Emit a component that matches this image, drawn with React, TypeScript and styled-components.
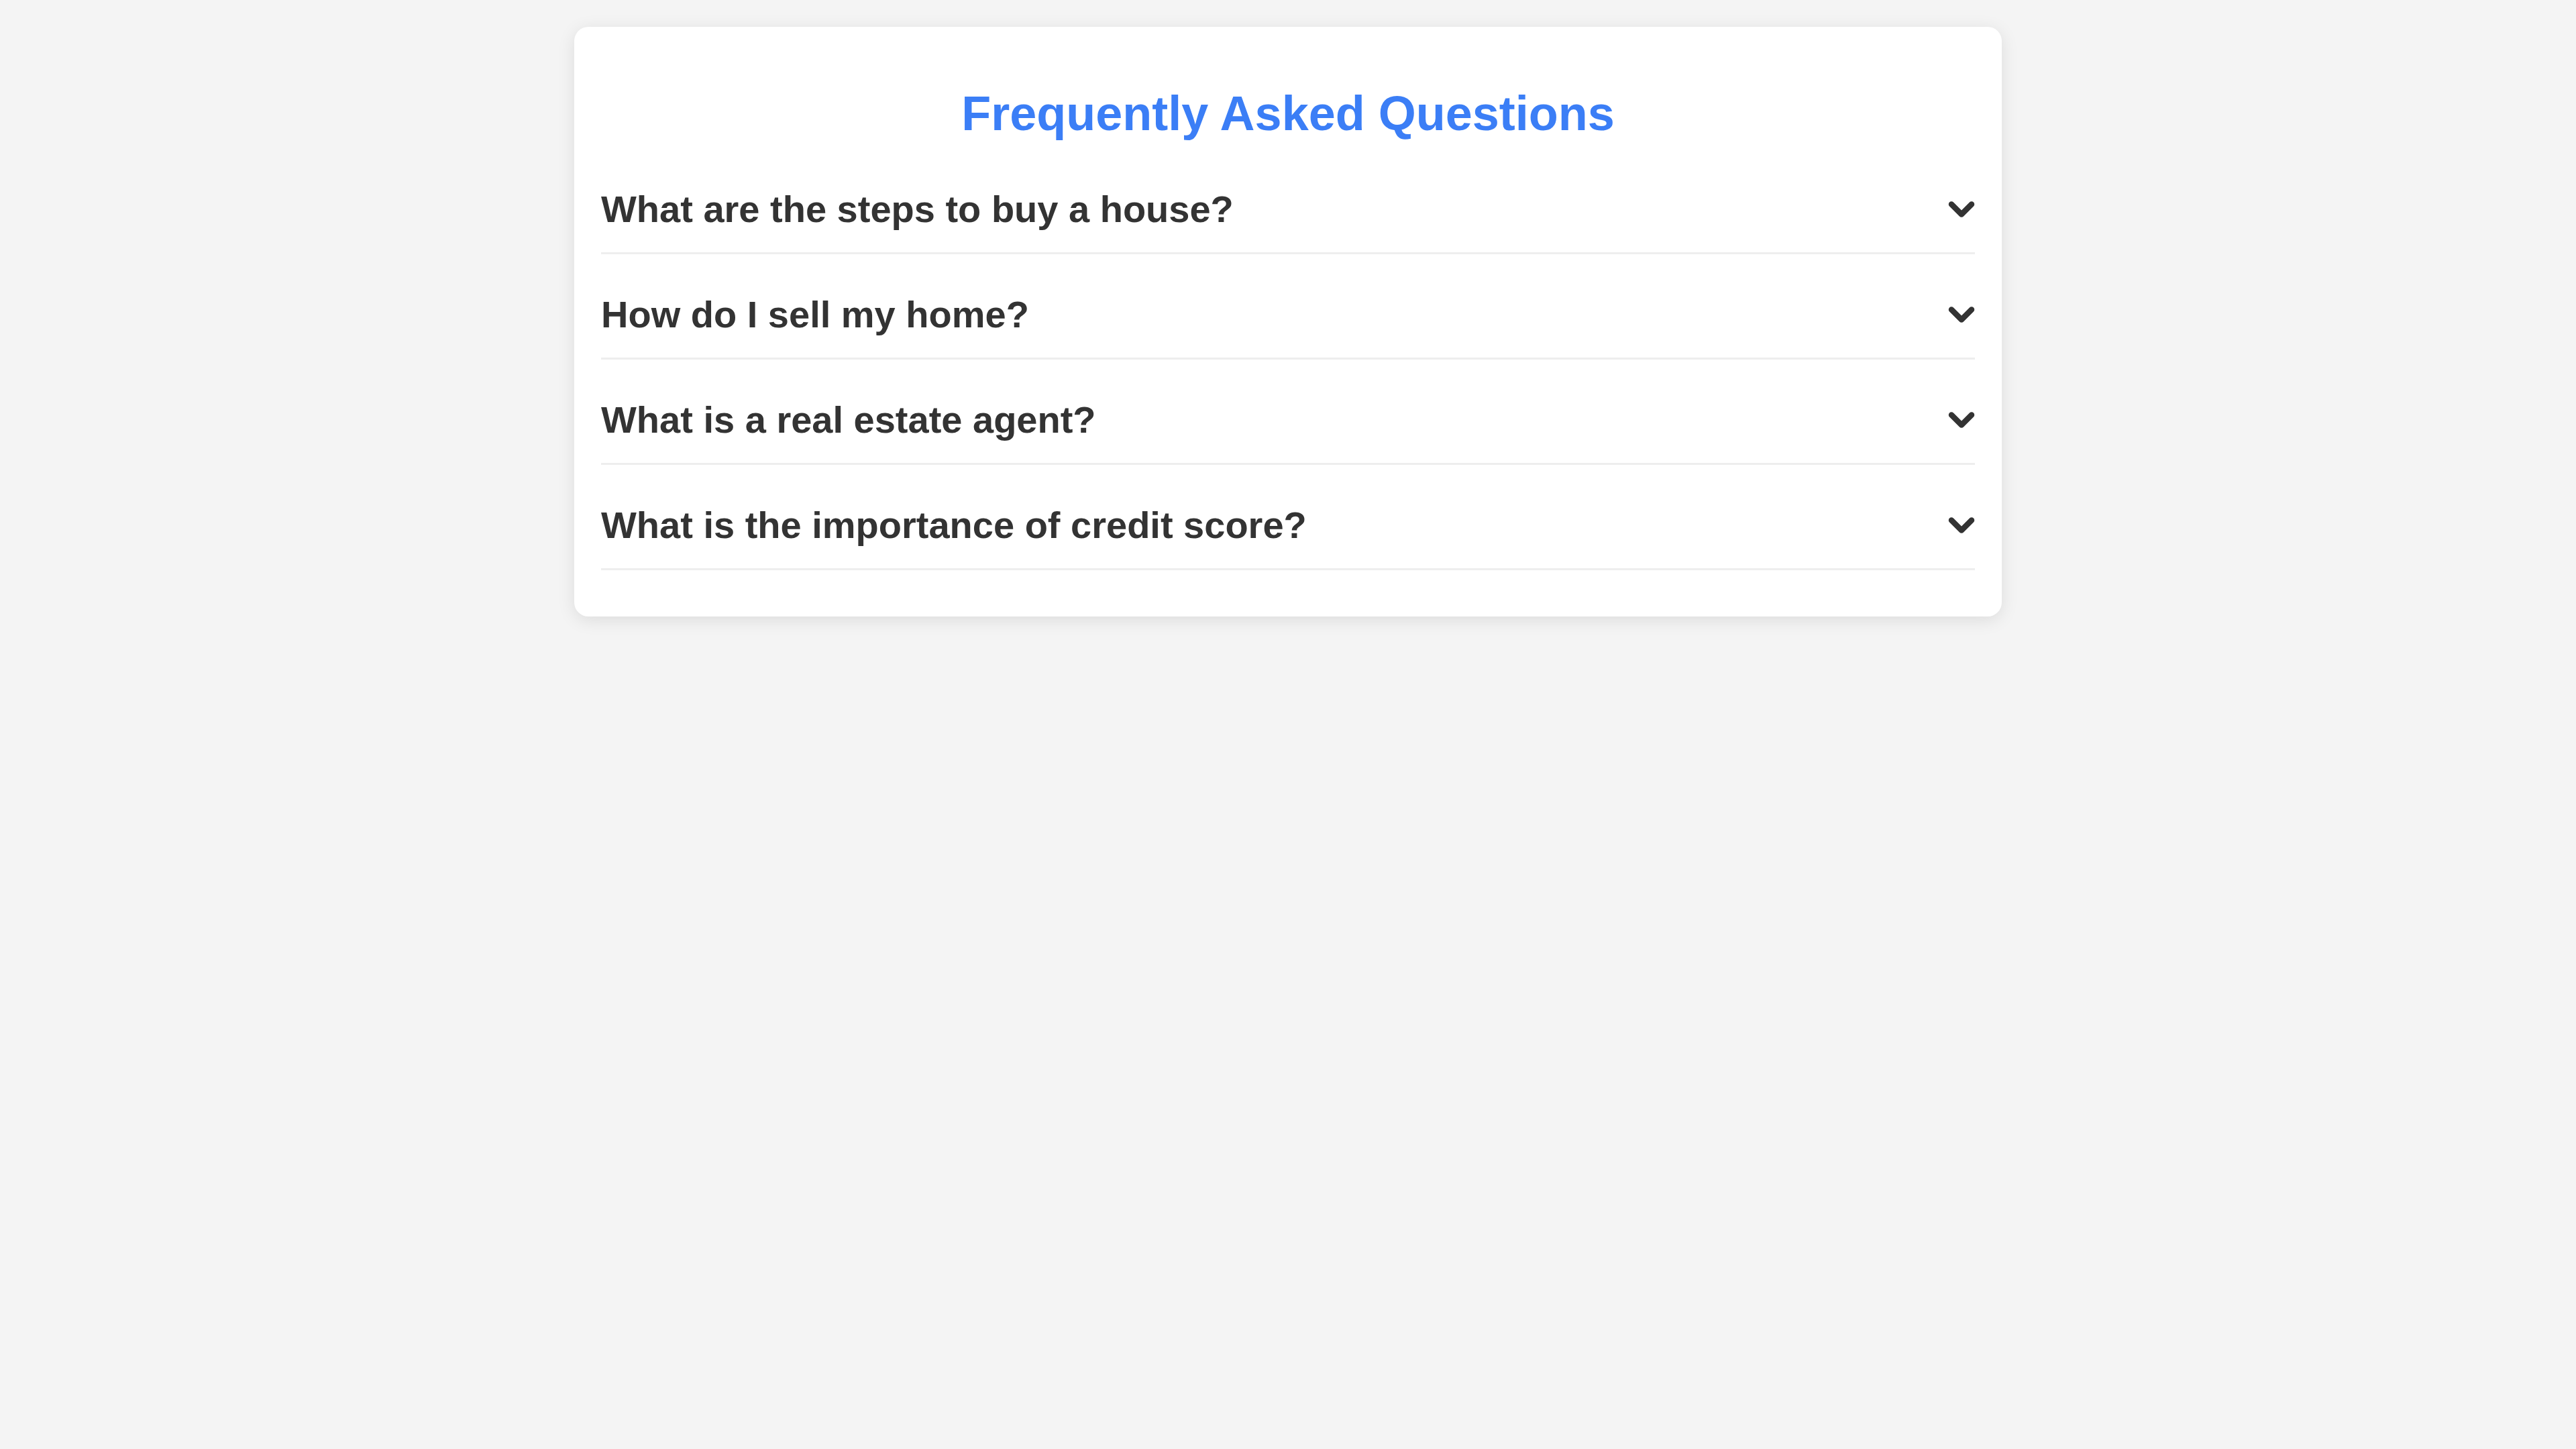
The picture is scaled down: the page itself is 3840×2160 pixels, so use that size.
import React from 'react';
import styled, { createGlobalStyle } from 'styled-components';

const GlobalStyle = createGlobalStyle`
  html, body {
    margin: 0;
    padding: 0;
    background: #f4f4f4;
    font-family: "Liberation Sans", Arial, sans-serif;
  }
`;

const Page = styled.div`
  min-height: 2160px;
  padding-top: 40px;
  box-sizing: border-box;
  display: flex;
  justify-content: center;
  align-items: flex-start;
`;

const Card = styled.div`
  width: 2128px;
  box-sizing: border-box;
  padding: 40px 40px 43px;
  background: #ffffff;
  border-radius: 21px;
  box-shadow: 0 5px 26px rgba(0, 0, 0, 0.1);
`;

const Title = styled.h2`
  margin: 48px 0 37px;
  text-align: center;
  font-size: 72px;
  font-weight: 700;
  line-height: 1.15;
  color: #3b7ef6;
`;

const Item = styled.div`
  display: flex;
  justify-content: space-between;
  align-items: center;
  padding: 32px 0;
  margin-bottom: 25.6px;
  border-bottom: 3px solid #eeeeee;
  cursor: pointer;
`;

const Question = styled.h3`
  margin: 0;
  font-size: 56px;
  font-weight: 700;
  line-height: 1.15;
  color: #333333;
`;

const Chevron = styled.svg`
  width: 40px;
  height: 26px;
  flex-shrink: 0;
`;

const questions = [
  'What are the steps to buy a house?',
  'How do I sell my home?',
  'What is a real estate agent?',
  'What is the importance of credit score?',
];

const ChevronDown = () => (
  <Chevron viewBox="0 0 40 26">
    <polyline
      points="5,5.5 20,20.5 35,5.5"
      fill="none"
      stroke="#333333"
      strokeWidth="8.5"
      strokeLinecap="round"
      strokeLinejoin="round"
    />
  </Chevron>
);

const App = () => {
  return (
    <>
      <GlobalStyle />
      <Page>
        <Card>
          <Title>Frequently Asked Questions</Title>
          {questions.map((q) => (
            <Item key={q}>
              <Question>{q}</Question>
              <ChevronDown />
            </Item>
          ))}
        </Card>
      </Page>
    </>
  );
};

export default App;
